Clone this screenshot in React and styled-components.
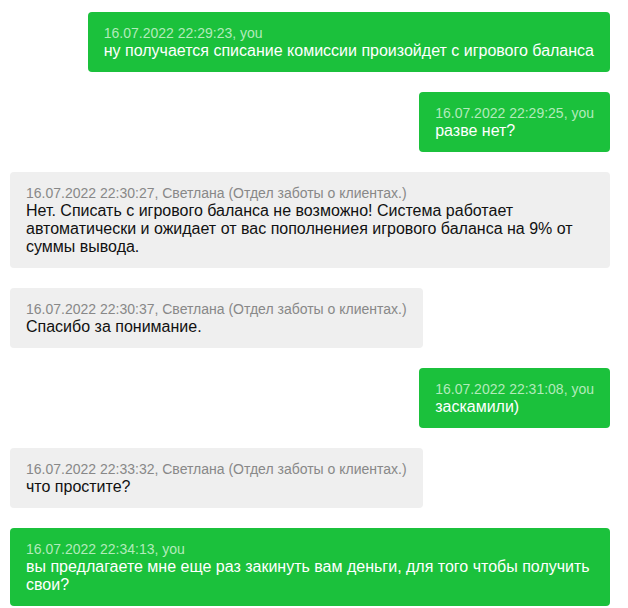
import React from 'react';
import styled, {createGlobalStyle} from 'styled-components';

const Global = createGlobalStyle`
  html, body {
    margin: 0;
    background: #fff;
    font-family: Arial, "Liberation Sans", sans-serif;
  }
`;

const messages = [
  {
    time: '16.07.2022 22:29:23',
    author: 'you',
    text: 'ну получается списание комиссии произойдет с игрового баланса',
  },
  {time: '16.07.2022 22:29:25', author: 'you', text: 'разве нет?'},
  {
    time: '16.07.2022 22:30:27',
    author: 'Светлана (Отдел заботы о клиентах.)',
    text:
      'Нет. Списать с игрового баланса не возможно! Система работает автоматически и ожидает от вас пополнениея игрового баланса на 9% от суммы вывода.',
  },
  {
    time: '16.07.2022 22:30:37',
    author: 'Светлана (Отдел заботы о клиентах.)',
    text: 'Спасибо за понимание.',
  },
  {time: '16.07.2022 22:31:08', author: 'you', text: 'заскамили)'},
  {
    time: '16.07.2022 22:33:32',
    author: 'Светлана (Отдел заботы о клиентах.)',
    text: 'что простите?',
  },
  {
    time: '16.07.2022 22:34:13',
    author: 'you',
    text:
      'вы предлагаете мне еще раз закинуть вам деньги, для того чтобы получить свои?',
  },
];

const Chat = styled.section`
  display: flex;
  flex-direction: column;
  gap: 20px;
  width: 600px;
  padding: 12px 0 0 10px;
`;

const Bubble = styled.article`
  align-self: ${p => (p.mine ? 'flex-end' : 'flex-start')};
  max-width: 100%;
  box-sizing: border-box;
  padding: 12px 16px;
  border-radius: 4px;
  background: ${p => (p.mine ? '#1bc13c' : '#efefef')};
  color: ${p => (p.mine ? '#fff' : '#111')};
  line-height: 18px;
`;

const Meta = styled.div`
  font-size: 14px;
  color: ${p => (p.mine ? '#b2ebbb' : '#888')};
`;

const Text = styled.div`
  font-size: 16px;
`;

const App = () => (
  <>
    <Global />
    <Chat>
      {messages.map(({time, author, text}) => {
        const mine = author === 'you';
        return (
          <Bubble key={time} mine={mine}>
            <Meta mine={mine}>
              {time}, {author}
            </Meta>
            <Text>{text}</Text>
          </Bubble>
        );
      })}
    </Chat>
  </>
);

export default App;
